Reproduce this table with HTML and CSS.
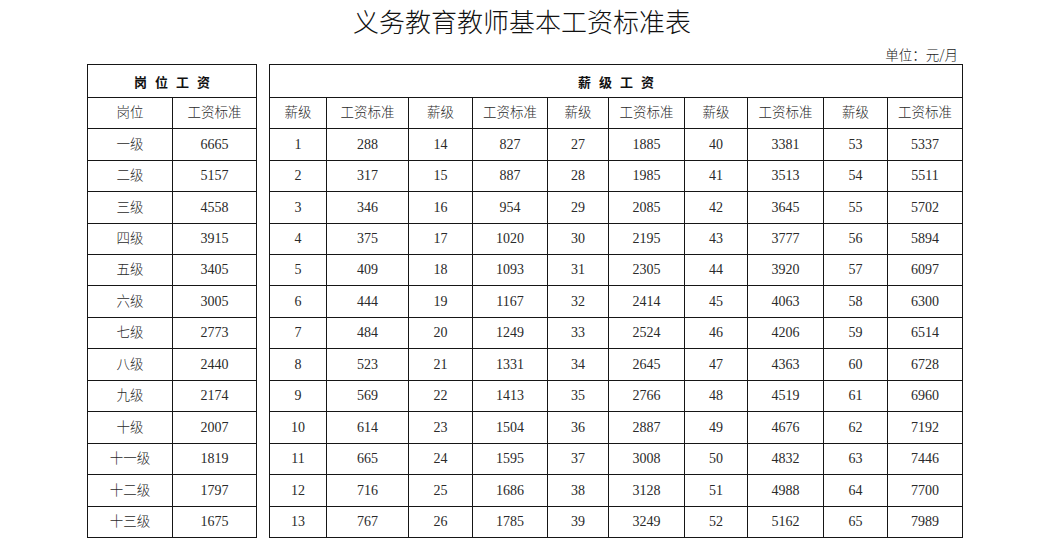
FILE: index.html
```html
<!DOCTYPE html>
<html lang="zh-CN">
<head>
<meta charset="utf-8">
<title>义务教育教师基本工资标准表</title>
<link rel="stylesheet" href="styles.css">
</head>
<body>
<div class="page">
  <h1 class="title">义务教育教师基本工资标准表</h1>
  <div class="unit">单位：元/月</div>
  <div class="tables">
    <div class="grid left">
      <div class="cap"><span class="spaced">岗位工资</span></div>
      <div class="hd">岗位</div><div class="hd">工资标准</div>
      <div class="zh">一级</div><div>6665</div>
      <div class="zh">二级</div><div>5157</div>
      <div class="zh">三级</div><div>4558</div>
      <div class="zh">四级</div><div>3915</div>
      <div class="zh">五级</div><div>3405</div>
      <div class="zh">六级</div><div>3005</div>
      <div class="zh">七级</div><div>2773</div>
      <div class="zh">八级</div><div>2440</div>
      <div class="zh">九级</div><div>2174</div>
      <div class="zh">十级</div><div>2007</div>
      <div class="zh">十一级</div><div>1819</div>
      <div class="zh">十二级</div><div>1797</div>
      <div class="zh">十三级</div><div>1675</div>
    </div>
    <div class="grid right">
      <div class="cap"><span class="spaced">薪级工资</span></div>
      <div class="hd">薪级</div><div class="hd">工资标准</div><div class="hd">薪级</div><div class="hd">工资标准</div><div class="hd">薪级</div><div class="hd">工资标准</div><div class="hd">薪级</div><div class="hd">工资标准</div><div class="hd">薪级</div><div class="hd">工资标准</div>
      <div>1</div><div>288</div><div>14</div><div>827</div><div>27</div><div>1885</div><div>40</div><div>3381</div><div>53</div><div>5337</div>
      <div>2</div><div>317</div><div>15</div><div>887</div><div>28</div><div>1985</div><div>41</div><div>3513</div><div>54</div><div>5511</div>
      <div>3</div><div>346</div><div>16</div><div>954</div><div>29</div><div>2085</div><div>42</div><div>3645</div><div>55</div><div>5702</div>
      <div>4</div><div>375</div><div>17</div><div>1020</div><div>30</div><div>2195</div><div>43</div><div>3777</div><div>56</div><div>5894</div>
      <div>5</div><div>409</div><div>18</div><div>1093</div><div>31</div><div>2305</div><div>44</div><div>3920</div><div>57</div><div>6097</div>
      <div>6</div><div>444</div><div>19</div><div>1167</div><div>32</div><div>2414</div><div>45</div><div>4063</div><div>58</div><div>6300</div>
      <div>7</div><div>484</div><div>20</div><div>1249</div><div>33</div><div>2524</div><div>46</div><div>4206</div><div>59</div><div>6514</div>
      <div>8</div><div>523</div><div>21</div><div>1331</div><div>34</div><div>2645</div><div>47</div><div>4363</div><div>60</div><div>6728</div>
      <div>9</div><div>569</div><div>22</div><div>1413</div><div>35</div><div>2766</div><div>48</div><div>4519</div><div>61</div><div>6960</div>
      <div>10</div><div>614</div><div>23</div><div>1504</div><div>36</div><div>2887</div><div>49</div><div>4676</div><div>62</div><div>7192</div>
      <div>11</div><div>665</div><div>24</div><div>1595</div><div>37</div><div>3008</div><div>50</div><div>4832</div><div>63</div><div>7446</div>
      <div>12</div><div>716</div><div>25</div><div>1686</div><div>38</div><div>3128</div><div>51</div><div>4988</div><div>64</div><div>7700</div>
      <div>13</div><div>767</div><div>26</div><div>1785</div><div>39</div><div>3249</div><div>52</div><div>5162</div><div>65</div><div>7989</div>
    </div>
  </div>
</div>
</body>
</html>
```

FILE: styles.css
```css
html, body {
  margin: 0;
  padding: 0;
  background: #ffffff;
}

body {
  font-family: "Liberation Serif", "Noto Sans CJK SC", serif;
  color: #1a1a1a;
}

.page {
  width: 876px;
  padding-left: 87px;
  padding-top: 5px;
}

.title {
  margin: 0;
  text-align: center;
  font-family: "Noto Sans CJK SC", sans-serif;
  font-weight: 300;
  font-size: 26px;
  line-height: 32px;
  color: #111;
  padding-right: 6px;
}

.unit {
  text-align: right;
  font-family: "Noto Sans CJK SC", sans-serif;
  font-weight: 300;
  font-size: 13.5px;
  line-height: 18px;
  height: 18px;
  margin-top: 8px;
  padding-right: 5px;
  color: #222;
}

.tables {
  display: flex;
  gap: 12px;
  align-items: flex-start;
  margin-top: 1px;
}

.grid {
  display: grid;
  gap: 1px;
  padding: 1px;
  background: #161616;
  grid-template-rows: 32px 30px 31px 30px 31px 30px 30px 31px 30px 31px 30px 31px 30px 31px 30px;
}

.left {
  grid-template-columns: 84px 83px;
}

.right {
  grid-template-columns: 56px 81px 63px 74px 60px 75px 62px 75px 63px 74px;
}

.grid > div {
  background: #ffffff;
  display: flex;
  align-items: center;
  justify-content: center;
  font-size: 14px;
  line-height: 1;
  color: #2a2a2a;
  white-space: nowrap;
}

.grid > .hd,
.grid > .zh {
  font-family: "Noto Sans CJK SC", sans-serif;
  font-weight: 300;
  font-size: 13.5px;
  padding-bottom: 2px;
}

.grid > .cap {
  grid-column: 1 / -1;
  font-family: "Noto Sans CJK SC", sans-serif;
  font-weight: 700;
  font-size: 13px;
  color: #111;
}

.spaced {
  letter-spacing: 8px;
  margin-right: -8px;
}
```
